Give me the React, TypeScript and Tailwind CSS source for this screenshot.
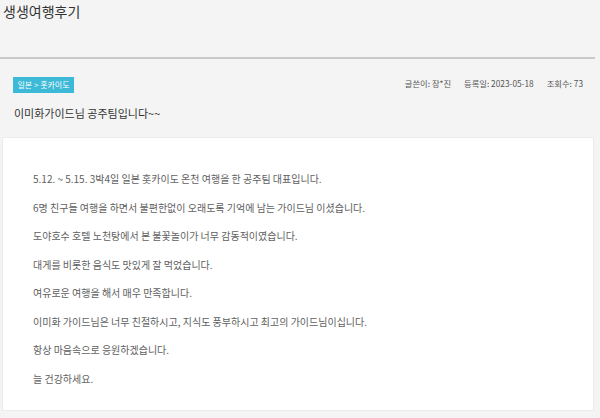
import React from "react";

const lines = [
  "5.12. ~ 5.15. 3박4일 일본 홋카이도 온천 여행을 한 공주팀 대표입니다.",
  "6명 친구들 여행을 하면서 불편한없이 오래도록 기억에 남는 가이드님 이셨습니다.",
  "도야호수 호텔 노천탕에서 본 불꽃놀이가 너무 감동적이였습니다.",
  "대게를 비롯한 음식도 맛있게 잘 먹었습니다.",
  "여유로운 여행을 해서 매우 만족합니다.",
  "이미화 가이드님은 너무 친절하시고, 지식도 풍부하시고 최고의 가이드님이십니다.",
  "항상 마음속으로 응원하겠습니다.",
  "늘 건강하세요.",
];

export default function App() {
  return (
    <div
      className="w-[600px] h-[418px] bg-[#f4f4f4] overflow-hidden"
      style={{ fontFamily: '"Noto Sans CJK KR", "Noto Sans", sans-serif' }}
    >
      <div className="pl-[3px] h-[57px] text-[14px] leading-[22px] text-[#333]">
        생생여행후기
      </div>
      <div className="w-[595px] h-[2px] bg-[#c9c9c9]" />
      <div className="flex items-start justify-between pl-[13px] pr-[17px] pt-[18px]">
        <div className="h-[16px] w-[61px] bg-[#3cb9d6] text-white text-[8px] leading-[16px] flex items-center justify-center">
          일본 &gt; 홋카이도
        </div>
        <div className="flex gap-[13px] text-[8.3px] leading-[12px] text-[#555] mt-[0px]">
          <span>글쓴이: 장*진</span>
          <span>등록일: 2023-05-18</span>
          <span>조회수: 73</span>
        </div>
      </div>
      <div className="pl-[14px] pt-[10px] text-[11px] leading-[20px] text-[#333]">
        이미화가이드님 공주팀입니다~~
      </div>
      <div className="mt-[14px] ml-[2px] w-[592px] h-[274px] bg-white border border-[#ececec] pl-[30px] pt-[27px]">
        <div className="flex flex-col">
          {lines.map((l, i) => (
            <p key={i} className="text-[10px] leading-[28.5px] text-[#606060]">
              {l}
            </p>
          ))}
        </div>
      </div>
    </div>
  );
}
